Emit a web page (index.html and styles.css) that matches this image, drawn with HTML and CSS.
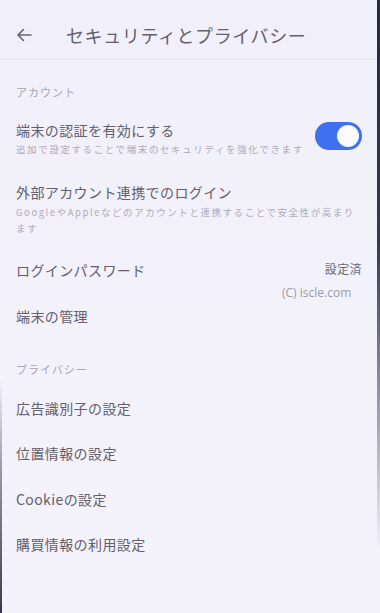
FILE: index.html
```html
<!DOCTYPE html>
<html lang="ja">
<head>
<meta charset="utf-8">
<link rel="stylesheet" href="styles.css">
</head>
<body>
<div class="screen">
  <header class="topbar">
    <svg class="back" width="16" height="14" viewBox="0 0 16 14"><path d="M15 7H2M7.5 1.5L2 7l5.5 5.5" fill="none" stroke="#66626e" stroke-width="1.6" stroke-linecap="round" stroke-linejoin="round"/></svg>
    <h1 class="title">セキュリティとプライバシー</h1>
  </header>

  <div class="section first">アカウント</div>
  <div class="row two r1">
    <div class="texts">
      <div class="main">端末の認証を有効にする</div>
      <div class="sub">追加で設定することで端末のセキュリティを強化できます</div>
    </div>
    <div class="toggle"><span class="knob"></span></div>
  </div>
  <div class="row two r2">
    <div class="texts">
      <div class="main">外部アカウント連携でのログイン</div>
      <div class="sub wrap">GoogleやAppleなどのアカウントと連携することで安全性が高まります</div>
    </div>
  </div>
  <div class="row simple">
    <div class="main">ログインパスワード</div>
    <div class="value">設定済</div>
  </div>
  <div class="row simple">
    <div class="main">端末の管理</div>
  </div>

  <div class="section second">プライバシー</div>
  <div class="row simple p">
    <div class="main">広告識別子の設定</div>
  </div>
  <div class="row simple p">
    <div class="main">位置情報の設定</div>
  </div>
  <div class="row simple p">
    <div class="main">Cookieの設定</div>
  </div>
  <div class="row simple p">
    <div class="main">購買情報の利用設定</div>
  </div>

  <div class="watermark">(C) iscle.com</div>
  <div class="edge-right"></div>
  <div class="edge-left"></div>
</div>
</body>
</html>
```

FILE: styles.css
```css
* { box-sizing: border-box; margin: 0; padding: 0; }
html, body { width: 380px; height: 613px; overflow: hidden; }
body {
  font-family: "Noto Sans CJK JP", "Noto Sans", sans-serif;
  background: #f2f0f9;
  color: #635f6c;
}
.screen {
  position: relative;
  width: 380px;
  height: 613px;
  background: linear-gradient(180deg, #f1eff9 0%, #f3f1fa 50%, #f4f2fb 100%);
}
.topbar {
  height: 60px;
  display: flex;
  align-items: center;
  padding: 10px 0 0 16px;
  border-bottom: 1px solid #e6e3ee;
  box-shadow: 0 1px 0 #f7f6fb;
}
.back { flex: none; margin-right: 34px; }
.title {
  font-size: 18px;
  font-weight: 400;
  letter-spacing: 0.6px;
  color: #64606d;
  line-height: 24px;
}
.section {
  font-size: 11px;
  line-height: 16px;
  letter-spacing: 1px;
  color: #aaa6b2;
  padding: 0 16px 8px;
}
.section.first { padding-top: 24px; }
.section.second { padding-top: 22px; }
.row {
  display: flex;
  align-items: center;
  padding: 0 18px 0 16px;
}
.row.r1 { padding-top: 12px; padding-bottom: 14px; }
.row.r2 { padding-top: 12px; padding-bottom: 11px; }
.row.simple { height: 46px; justify-content: space-between; }
.row.simple.p { height: 45.5px; }
.texts { flex: 1; min-width: 0; }
.main {
  font-size: 14px;
  line-height: 20px;
  letter-spacing: 0.4px;
  color: #635f6c;
}
.sub {
  font-size: 9.5px;
  line-height: 14px;
  letter-spacing: 1.6px;
  color: #b0acb9;
  margin-top: 2px;
  white-space: nowrap;
}
.sub.wrap {
  white-space: normal;
  line-height: 16px;
  letter-spacing: 1.55px;
  margin-top: 2px;
}
.value {
  font-size: 12px;
  line-height: 18px;
  letter-spacing: 0.4px;
  color: #6d6975;
  margin-top: -2px;
}
.toggle {
  flex: none;
  width: 47px;
  height: 28px;
  border-radius: 14px;
  background: #3f70ee;
  position: relative;
  margin-top: -4px;
}
.knob {
  position: absolute;
  right: 3px;
  top: 3px;
  width: 22px;
  height: 22px;
  border-radius: 50%;
  background: #fbfbff;
}
.watermark {
  position: absolute;
  left: 282px;
  top: 284px;
  font-family: "Open Sans", "Liberation Sans", sans-serif;
  font-size: 12px;
  line-height: 18px;
  color: #9d99a6;
}
.edge-right {
  position: absolute;
  right: 0;
  top: 0;
  width: 3px;
  height: 613px;
  background: linear-gradient(180deg, #2a2840 0%, #3a3850 40%, rgba(60,58,80,0.4) 70%, rgba(60,58,80,0) 90%);
}
.edge-left {
  position: absolute;
  left: 0;
  top: 380px;
  width: 2px;
  height: 233px;
  background: linear-gradient(180deg, rgba(60,58,80,0) 0%, rgba(60,58,80,0.5) 40%, #3a3850 100%);
}
```
